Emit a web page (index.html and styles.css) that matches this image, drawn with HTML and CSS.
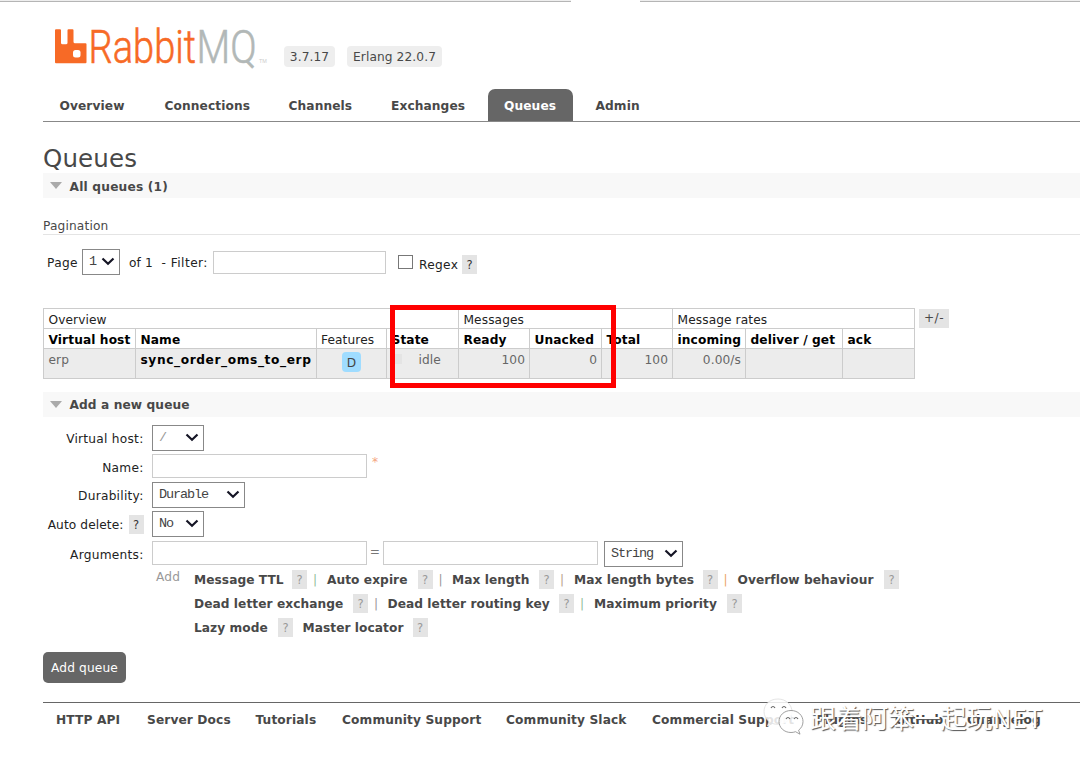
FILE: index.html
```html
<!DOCTYPE html>
<html lang="en">
<head>
<meta charset="utf-8">
<title>RabbitMQ Management</title>
<link rel="stylesheet" href="styles.css">
</head>
<body>
<div class="page">
  <div class="browser-edge"><i class="edge left"></i><i class="edge right"></i></div>
  <header class="header">
    <svg class="logo" width="216" height="48" viewBox="0 -2 216 48">
      <path fill="#f76a26" d="M1 9q0-1 1-1h4q1 0 1 1v12.500q0 1.500 1.500 1.500h3.500q1.500 0 1.500-1.500v-12.500q0-1 1-1h4q1 0 1 1v11.500q0 1.500 1.500 1.500h10.500q1 0 1 1v18q0 1-1 1h-29.500q-1 0-1-1z" transform="translate(0 -.8)"/>
      <rect x="19" y="28" width="7.500" height="7.500" rx="2.500" fill="#fff"/>
      <text class="logo-a" x="34.500" y="41" textLength="107.500" lengthAdjust="spacingAndGlyphs">Rabbit</text>
      <text class="logo-b" x="142.500" y="41" textLength="60" lengthAdjust="spacingAndGlyphs">MQ</text>
      <text class="logo-tm" x="205" y="41">TM</text>
    </svg>
    <span class="version v1">3.7.17</span>
    <span class="version v2">Erlang 22.0.7</span>
  </header>
  <nav class="tabs">
    <a>Overview</a><a>Connections</a><a>Channels</a><a>Exchanges</a><a class="selected">Queues</a><a>Admin</a>
  </nav>
  <h1>Queues</h1>
  <h2><i class="tri"></i>All queues (1)</h2>
  <h3>Pagination</h3>
  <div class="filter">
    <span class="f-page">Page</span>
    <span class="select s-page">1<svg width="14" height="9" viewBox="0 0 14 9"><path d="M1.500 1.500 7 6.800l5.500-5.300"/></svg></span>
    <span class="f-of">of 1</span><span class="f-filter">- Filter:</span>
    <span class="input i-filter"></span>
    <span class="check"></span><span class="f-regex">Regex</span><span class="help dark">?</span>
  </div>
  <div class="queues">
    <div class="table-wrap">
      <table>
        <colgroup><col class="c1"><col class="c2"><col class="c3"><col class="c4"><col class="c5"><col class="c6"><col class="c7"><col class="c8"><col class="c9"><col class="c10"></colgroup>
        <tr class="group"><td colspan="4">Overview</td><td colspan="3">Messages</td><td colspan="3">Message rates</td></tr>
        <tr class="heads"><th>Virtual host</th><th>Name</th><td>Features</td><th>State</th><th>Ready</th><th>Unacked</th><th>Total</th><th>incoming</th><th>deliver / get</th><th>ack</th></tr>
        <tr class="data"><td>erp</td><td><b>sync_order_oms_to_erp</b></td><td class="center"><span class="feature">D</span></td><td class="state"><i></i>idle</td><td class="r">100</td><td class="r">0</td><td class="r">100</td><td class="r">0.00/s</td><td></td><td></td></tr>
      </table>
      <div class="highlight"></div>
    </div>
    <span class="plus">+/-</span>
  </div>
  <h2 class="add-title"><i class="tri"></i>Add a new queue</h2>
  <div class="form">
    <div class="row r1"><label>Virtual host:</label><span class="select s-small faint">/<svg width="14" height="9" viewBox="0 0 14 9"><path d="M1.500 1.500 7 6.800l5.500-5.300"/></svg></span></div>
    <div class="row r2"><label>Name:</label><span class="input"></span><span class="star">*</span></div>
    <div class="row r3"><label>Durability:</label><span class="select s-mid">Durable<svg width="14" height="9" viewBox="0 0 14 9"><path d="M1.500 1.500 7 6.800l5.500-5.300"/></svg></span></div>
    <div class="row r4"><label>Auto delete: <span class="help dark">?</span></label><span class="select s-small">No<svg width="14" height="9" viewBox="0 0 14 9"><path d="M1.500 1.500 7 6.800l5.500-5.300"/></svg></span></div>
    <div class="row r5"><label>Arguments:</label><span class="input"></span><span class="eq">=</span><span class="input"></span><span class="select s-string">String<svg width="14" height="9" viewBox="0 0 14 9"><path d="M1.500 1.500 7 6.800l5.500-5.300"/></svg></span></div>
  </div>
  <div class="shortcuts">
    <span class="add">Add</span>
    <div class="links">
      <div class="line l1"><b>Message TTL</b><span class="help">?</span><i class="green">|</i><b>Auto expire</b><span class="help">?</span><i>|</i><b>Max length</b><span class="help">?</span><i class="tan">|</i><b>Max length bytes</b><span class="help">?</span><i class="orange">|</i><b>Overflow behaviour</b><span class="help">?</span></div>
      <div class="line l2"><b>Dead letter exchange</b><span class="help">?</span><i>|</i><b>Dead letter routing key</b><span class="help">?</span><i class="green">|</i><b>Maximum priority</b><span class="help">?</span></div>
      <div class="line l3"><b>Lazy mode</b><span class="help">?</span><b>Master locator</b><span class="help">?</span></div>
    </div>
  </div>
  <button class="submit">Add queue</button>
  <footer class="footer">
    <a>HTTP API</a><a>Server Docs</a><a>Tutorials</a><a>Community Support</a><a>Community Slack</a><a>Commercial Support</a><a>Plugins</a><a>GitHub</a><a>Changelog</a>
  </footer>
  <div class="watermark">
    <svg width="44" height="38" viewBox="0 0 44 38">
      <g fill="#fff" fill-opacity=".85" stroke="#888" stroke-width=".8">
        <path stroke="#ddd" d="M16 1C7 1 2 7 2 13.500c0 4 2 7.500 5 10L5.500 28l5-2.500c2 .6 3.500.8 5.500.8 8 0 14-5.500 14-12.500S24 1 16 1z"/>
        <path d="M29 12.500c-7 0-12 5-12 11s5 11 12 11c1.500 0 3-.2 4.500-.8l4.500 2.500-1.400-4c2.700-2 4.400-5 4.400-8.700 0-6-5-11-12-11z"/>
      </g>
      <path d="M9 10q2-3 4 0M20 10q2-3 4 0M24 21q2-3 4 0M32 21q2-3 4 0" fill="none" stroke="#666" stroke-width="1.200"/>
    </svg>
    <span>跟着阿笨一起玩NET</span>
  </div>
</div>
</body>
</html>
```
FILE: styles.css
```css
* { box-sizing: border-box; }
body { margin: 0; background: #fff; }
.page {
  position: relative; width: 1080px; height: 766px; overflow: hidden;
  padding-left: 43px; display: flex; flex-direction: column;
  font: 12.200px/16px "DejaVu Sans", Verdana, sans-serif; letter-spacing: .1px; color: #484848; white-space: nowrap;
}
.browser-edge { height: 2px; margin-left: -43px; display: flex; justify-content: space-between; flex: none; }
.edge { height: 2px; background: #eee; border-bottom: 1px solid #b5b5b5; }
.edge.left { width: 571px; }
.edge.right { width: 440px; }

.header { height: 87px; flex: none; display: flex; align-items: flex-start; padding: 18px 0 0 11px; }
.logo { flex: none; display: block; overflow: visible; }
.logo-a, .logo-b { font-family: Roboto, sans-serif; font-weight: 300; font-size: 46px; letter-spacing: 0; stroke-width: .6; }
.logo-a { fill: #f76a26; stroke: #f76a26; }
.logo-b { fill: #b2b8b7; stroke: #b2b8b7; }
.logo-tm { font: 5.500px "Liberation Sans", sans-serif; letter-spacing: 0; fill: #ccc; }
.version { height: 21px; margin-top: 26px; border-radius: 4px; background: #eee; line-height: 22px; text-align: center; }
.v1 { width: 51px; margin-left: 14px; }
.v2 { width: 95px; margin-left: 12px; }

.tabs { height: 33px; flex: none; display: grid; grid-template-columns: 105px 124px 102.500px 114px 90.500px 84px; border-bottom: 1px solid #888; font-weight: bold; }
.tabs a { padding-left: 16.500px; line-height: 34px; height: 32px; }
.tabs .selected { width: 85px; margin-left: -1px; background: #666; color: #fff; border-radius: 7px 7px 0 0; }

h1 { margin: 22px 0 0; height: 29px; flex: none; font-size: 24.500px; line-height: 29px; font-weight: normal; letter-spacing: .15px; }
h2 { margin: 0; height: 25px; flex: none; display: flex; align-items: center; padding: 3px 0 0 7px; background: #f8f8f8; font-size: 12.200px; line-height: 25px; letter-spacing: .2px; }
.tri { border: 6px solid transparent; border-top: 7px solid #aaa; border-bottom: 0; margin: -3px 7.500px 0 0; }
h3 { margin: 18px 0 0; height: 19px; flex: none; font-size: 12.200px; font-weight: normal; line-height: 20px; letter-spacing: .15px; border-bottom: 1px solid #e4e4e4; }

.select { flex: none; display: flex; align-items: center; justify-content: space-between; height: 26px; padding: 0 4px 1px 6px; border: 1px solid #888; background: #fff; font: 13.500px/24px "Liberation Mono", monospace; letter-spacing: -1.100px; color: #444; }
.select svg { fill: none; stroke: #151525; stroke-width: 2.200; flex: none; }
.input { width: 215px; height: 24px; flex: none; border: 1px solid #ccc; background: #fff; }
.help { width: 15px; height: 19px; flex: none; display: inline-block; background: #e4e4e4; color: #999; font-size: 11.500px; line-height: 20px; text-align: center; font-weight: normal; letter-spacing: 0; }
.help.dark { color: #333; }

.filter { height: 26px; margin-top: 14px; flex: none; display: flex; align-items: center; color: #222; }
.f-page { width: 39px; padding: 1px 0 0 4px; letter-spacing: .35px; }
.s-page { width: 38px; }
.f-of { width: 32.500px; margin-left: 9px; padding-top: 2px; }
.f-filter { width: 51px; letter-spacing: .45px; padding-top: 1px; }
.i-filter { width: 173px; height: 23px; }
.check { width: 15px; height: 14px; margin: 0 6.500px 0 12px; border: 1px solid #777; }
.f-regex { width: 43px; padding-top: 5px; letter-spacing: .3px; }
.filter .help { margin-top: 4px; }

.queues { height: 71px; margin-top: 33px; flex: none; display: flex; align-items: flex-start; }
.table-wrap { position: relative; width: 872px; flex: none; }
table { width: 871px; table-layout: fixed; border-collapse: collapse; color: #000; }
td, th { padding: 0 0 0 4.500px; border: 1px solid #ccc; text-align: left; overflow: visible; }
.group td { height: 20px; color: #222; padding-top: 2px; }
.heads td, .heads th { height: 20px; padding-top: 2px; }
.heads td { color: #222; padding-left: 4px; }
.group td, .heads td, .heads th { line-height: 16px; }
.data td { height: 30px; padding-top: 3px; vertical-align: top; background: #ececec; color: #666; line-height: 17px; }
.data b { color: #000; letter-spacing: .6px; }
.data .r { text-align: right; padding-right: 4px; }
.data .center { text-align: center; padding-left: 0; }
.c1 { width: 92px; } .c2 { width: 181px; } .c3 { width: 70px; } .c4 { width: 72px; } .c5 { width: 71px; }
.c6 { width: 72px; } .c7 { width: 71px; } .c8 { width: 73px; } .c9 { width: 97px; } .c10 { width: 72px; }
.feature { display: inline-block; width: 19px; height: 20px; border-radius: 4px; background: #9fdcff; color: #444; line-height: 22px; }
.state i { display: inline-block; width: 8px; height: 10px; margin: 0 17px 0 2px; background: #e4e4e4; }
.highlight { position: absolute; left: 347px; top: -3px; width: 226px; height: 83px; border: 5px solid #f00; }
.plus { width: 30px; height: 19px; margin: 1px 0 0 4px; background: #e4e4e4; line-height: 19px; text-align: center; letter-spacing: .5px; }

.add-title { margin-top: 13px; letter-spacing: .1px; padding-top: 2px; }
.form { height: 147px; padding-top: 8px; flex: none; color: #222; }
.row { display: flex; align-items: flex-start; }
.row label { width: 100.500px; margin-right: 8.500px; text-align: right; padding-top: 6px; letter-spacing: .25px; }
.r1 { height: 29px; }
.r2 { height: 28px; }
.r3 { height: 29px; }
.r4 { height: 30px; }
.r5 { height: 26px; }
.row.r4 label { padding-top: 4px; letter-spacing: .1px; }
.r4 .help { margin-left: 1px; }
.s-small { width: 52px; }
.faint { color: #999; }
.s-mid { width: 93px; }
.s-string { width: 79px; margin-left: 6px; }
.star { margin-left: 5px; color: #f5a580; }
.eq { width: 16px; line-height: 23px; text-align: center; color: #777; }

.shortcuts { height: 88px; flex: none; display: flex; padding-left: 113px; }
.add { width: 38px; padding-top: 5px; color: #999; letter-spacing: .25px; }
.links { padding-top: 4px; }
.line { height: 24px; display: grid; align-items: center; line-height: 19px; letter-spacing: .06px; }
.line .help { margin-top: -1px; }
.line i { font-style: normal; color: #999; padding-left: 6px; }
.line .green { color: #8fbf9a; }
.line .tan { color: #b9a58c; }
.line .orange { color: #eca66a; }
.l1 { grid-template-columns: 98px 15px 20px 90.500px 15px 19.500px 87px 15px 20px 128.500px 15px 20px 146.500px 15px; }
.l2 { grid-template-columns: 159px 15px 19.500px 171.500px 15px 20px 133px 15px; }
.l3 { grid-template-columns: 84px 24.500px 110px 15px; }

.submit { width: 83px; height: 31px; flex: none; padding: 1px 0 0; border: 0; border-radius: 5px; background: #666; color: #fff; font: inherit; letter-spacing: .15px; }
.footer { height: 36px; margin-top: 19px; flex: none; border-top: 1px solid #666; display: grid; grid-template-columns: 91px 108.500px 86.500px 164px 146px 164px 79px 72px 80px; padding-left: 13px; font-weight: bold; line-height: 35px; letter-spacing: .12px; }
.watermark { position: absolute; left: 762px; top: 698px; display: flex; align-items: center; }
.watermark svg { margin-right: 4px; flex: none; }
.watermark span { margin-top: -1px; font: 400 26px/36px "Noto Sans CJK SC", sans-serif; letter-spacing: .1px; color: #fff; text-shadow: 1px 1px 1px #555; }
```
